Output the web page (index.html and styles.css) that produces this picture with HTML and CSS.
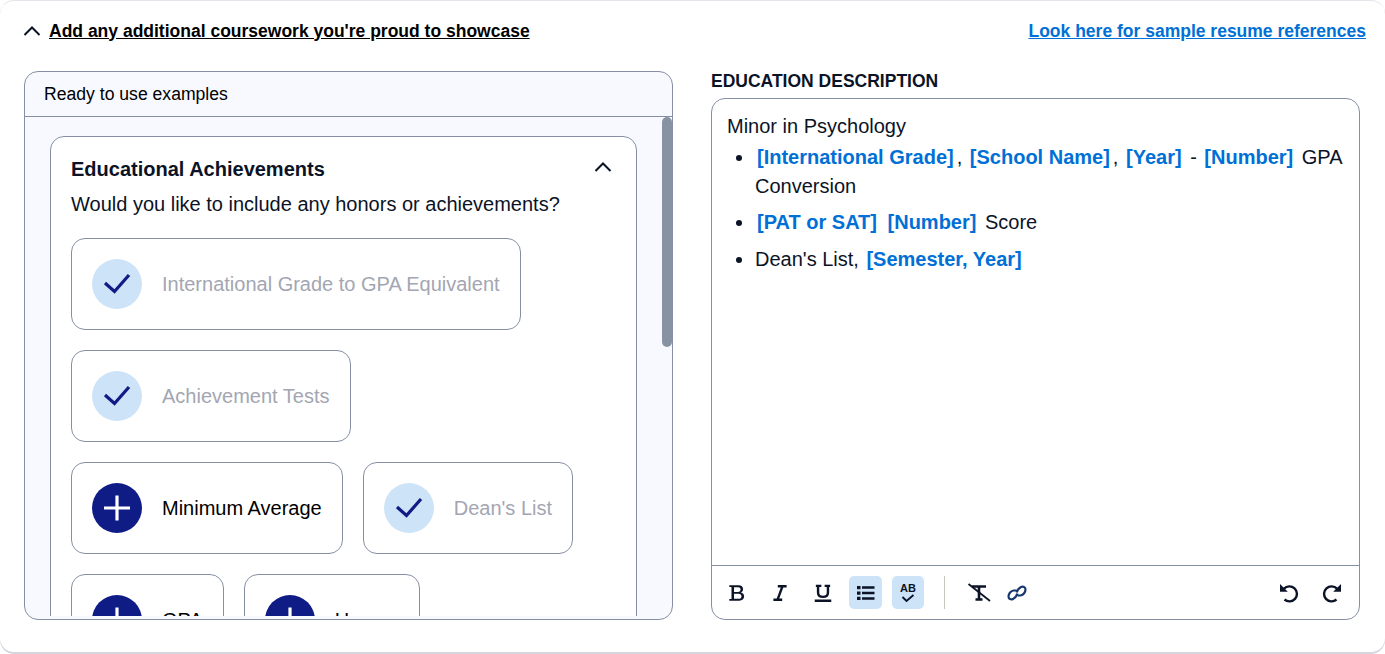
FILE: index.html
```html
<!DOCTYPE html>
<html lang="en">
<head>
    <meta charset="UTF-8">
    <title>Education description</title>
    <link rel="stylesheet" href="styles.css">
</head>
<body>
    <div class="page-card">
        <div class="top-row">
            <a class="toggle-link" href="#">
                <svg class="chevron" width="18" height="18" viewBox="0 0 18 18"><path d="M1.500 13 9 5.500 16.500 13"/></svg>
                <span>Add any additional coursework you're proud to showcase</span>
            </a>
            <a class="sample-link" href="#">Look here for sample resume references</a>
        </div>
        <div class="columns">
            <div class="examples-panel">
                <div class="examples-title">Ready to use examples</div>
                <div class="examples-scroll">
                    <div class="thumb"></div>
                    <div class="group-card">
                        <div class="group-head">
                            <h3>Educational Achievements</h3>
                            <svg class="chevron" width="18" height="18" viewBox="0 0 18 18"><path d="M1.500 13 9 5.500 16.500 13"/></svg>
                        </div>
                        <p class="group-question">Would you like to include any honors or achievements?</p>
                        <div class="chips">
                            <div class="chip-row">
                                <div class="chip used">
                                    <span class="chip-icon"><svg width="30" height="30" viewBox="0 0 30 30"><path d="M3 14 12.500 22.500 27 6"/></svg></span>
                                    International Grade to GPA Equivalent
                                </div>
                            </div>
                            <div class="chip-row">
                                <div class="chip used">
                                    <span class="chip-icon"><svg width="30" height="30" viewBox="0 0 30 30"><path d="M3 14 12.500 22.500 27 6"/></svg></span>
                                    Achievement Tests
                                </div>
                            </div>
                            <div class="chip-row">
                                <div class="chip">
                                    <span class="chip-icon"><svg width="30" height="30" viewBox="0 0 30 30"><path d="M15 2.500V27.500M2 15H28"/></svg></span>
                                    Minimum Average
                                </div>
                                <div class="chip used">
                                    <span class="chip-icon"><svg width="30" height="30" viewBox="0 0 30 30"><path d="M3 14 12.500 22.500 27 6"/></svg></span>
                                    Dean's List
                                </div>
                            </div>
                            <div class="chip-row">
                                <div class="chip">
                                    <span class="chip-icon"><svg width="30" height="30" viewBox="0 0 30 30"><path d="M15 2.500V27.500M2 15H28"/></svg></span>
                                    GPA
                                </div>
                                <div class="chip">
                                    <span class="chip-icon"><svg width="30" height="30" viewBox="0 0 30 30"><path d="M15 2.500V27.500M2 15H28"/></svg></span>
                                    Honors
                                </div>
                            </div>
                        </div>
                    </div>
                </div>
            </div>
            <div class="editor-col">
                <div class="editor-label">EDUCATION DESCRIPTION</div>
                <div class="editor">
                    <div class="editor-body">
                        <div>Minor in Psychology</div>
                        <ul>
                            <li><b class="ph">[International Grade]</b>, <b class="ph">[School Name]</b>, <b class="ph">[Year]</b> - <b class="ph">[Number]</b> GPA Conversion</li>
                            <li><b class="ph">[PAT or SAT]</b> <b class="ph">[Number]</b> Score</li>
                            <li>Dean's List, <b class="ph">[Semester, Year]</b></li>
                        </ul>
                    </div>
                    <div class="toolbar">
                        <span class="tool"><svg width="22" height="22" viewBox="0 0 20 20"><path class="solid" d="M3 3H11.500C14 3 15.500 4.400 15.500 6.500C15.500 8 14.700 9 13.500 9.500C15.200 9.900 16.500 11.100 16.500 13C16.500 15.400 14.800 17 12 17H3V15.500H5V4.500H3ZM7.300 4.700V9H11C12.400 9 13.200 8.100 13.200 6.800C13.200 5.500 12.400 4.700 11 4.700ZM7.300 10.600V15.300H11.500C13.100 15.300 14.100 14.400 14.100 12.900C14.100 11.500 13.100 10.600 11.500 10.600Z"/></svg></span>
                        <span class="tool"><svg width="22" height="22" viewBox="0 0 20 20"><path class="line" d="M8 3.800H16M4 16.200H12M12.300 3.800 7.700 16.200" stroke-width="2.200"/></svg></span>
                        <span class="tool"><svg width="22" height="22" viewBox="0 0 20 20"><path class="line" d="M3.500 3.500H8.500M11.500 3.500H16.500M5.500 3.500V9.500C5.500 12.300 7.300 13.500 10 13.500C12.700 13.500 14.500 12.300 14.500 9.500V3.500M2.500 17H17.500" stroke-width="2.200"/></svg></span>
                        <span class="tool on"><svg width="20" height="20" viewBox="0 0 20 20"><path class="line" d="M6 4.500H18.500M6 10H18.500M6 15.500H18.500" stroke-width="2.400"/><path class="solid" d="M1 3H4.500V6.300H1ZM1 8.400H4.500V11.700H1ZM1 13.800H4.500V17.100H1Z"/></svg></span>
                        <span class="tool on spell"><span class="spell-text">AB</span><svg width="14" height="9" viewBox="0 0 14 9"><path class="line" d="M1.500 3 5.500 7 12.500 1" stroke-width="1.800"/></svg></span>
                        <span class="tool-sep"></span>
                        <span class="tool"><svg width="24" height="20" viewBox="0 0 24 20"><path class="line" d="M5 3.500H19M12 3.500V16.500M8.500 16.500H15.500" stroke-width="2.600"/><path class="line" d="M1.500 1 23 18" stroke-width="1.800"/></svg></span>
                        <span class="tool link-tool"><svg width="20" height="20" viewBox="0 0 20 20"><path class="link" d="M9.300 7.500 6.500 7.500C3.500 8 1.500 11 1.500 13.500C1.500 16 4 17 6 16C8 15 9.800 13 10.300 10.500M10.700 12.500 13.500 12.500C16.500 12 18.500 9 18.500 6.500C18.500 4 16 3 14 4C12 5 10.200 7 9.700 9.500"/></svg></span>
                        <span class="toolbar-gap"></span>
                        <span class="tool"><svg width="22" height="22" viewBox="0 0 22 22"><path class="line" d="M6 6.700A7.500 7.500 0 1 1 6.500 17.500" stroke-width="2.400"/><path class="solid" d="M2 2V9.800H9.800Z"/></svg></span>
                        <span class="tool"><svg width="22" height="22" viewBox="0 0 22 22"><path class="line" d="M16 6.700A7.500 7.500 0 1 0 15.500 17.500" stroke-width="2.400"/><path class="solid" d="M20 2V9.800H12.200Z"/></svg></span>
                    </div>
                </div>
            </div>
        </div>
    </div>
</body>
</html>
```

FILE: styles.css
```css
html, body {
    margin: 0;
    height: 100%;
    overflow: hidden;
}
body {
    background-color: #fff;
    font-family: "Liberation Sans", Arial, sans-serif;
    color: #000;
}
.page-card {
    box-sizing: border-box;
    height: 652px;
    padding: 19px 19px 0 24px;
    background-color: #fff;
    border-top: 1px solid #e4e5ea;
    border-radius: 14px;
    box-shadow: 0 2px 0 #d5d7e0;
}
.top-row {
    display: flex;
    justify-content: space-between;
    align-items: center;
    height: 22px;
    font-size: 17.500px;
    font-weight: bold;
}
.toggle-link {
    display: flex;
    align-items: center;
    gap: 8px;
    color: #000;
    text-decoration: underline;
}
.toggle-link .chevron {
    margin-left: -1px;
}
.sample-link {
    color: #0070d6;
    text-decoration: underline;
}
.chevron path {
    fill: none;
    stroke: #0b1326;
    stroke-width: 2;
}
.columns {
    display: flex;
    gap: 38px;
    margin-top: 29px;
    margin-right: 6px;
}
.examples-panel {
    box-sizing: border-box;
    display: flex;
    flex-direction: column;
    width: 649px;
    height: 549px;
    padding-bottom: 3px;
    background-color: #f8f9ff;
    border: 1px solid #858fa3;
    border-radius: 14px;
    overflow: hidden;
}
.examples-title {
    flex: none;
    box-sizing: border-box;
    height: 45px;
    padding: 12px 19px 0;
    font-size: 17.600px;
    line-height: 20px;
    border-bottom: 1px solid #858fa3;
}
.examples-scroll {
    position: relative;
    flex: 1;
    padding: 19px 35px 0 25px;
    overflow: hidden;
}
.thumb {
    position: absolute;
    top: 0;
    right: 0;
    width: 10px;
    height: 230px;
    background-color: #8792a2;
    border-radius: 5px;
}
.group-card {
    box-sizing: border-box;
    padding: 20px;
    background-color: #fff;
    border: 1px solid #858fa3;
    border-radius: 14px;
}
.group-head {
    display: flex;
    justify-content: space-between;
    align-items: center;
    padding-right: 4px;
}
.group-head h3 {
    margin: 0;
    font-size: 20px;
    line-height: 24px;
    color: #0b1326;
}
.group-head .chevron {
    margin-top: -5px;
}
.group-question {
    margin: 11px 0 0;
    font-size: 20px;
    line-height: 24px;
    color: #0b1326;
}
.chips {
    display: flex;
    flex-direction: column;
    gap: 20px;
    margin-top: 22px;
}
.chip-row {
    display: flex;
    gap: 20px;
}
.chip {
    box-sizing: border-box;
    display: flex;
    align-items: center;
    gap: 20px;
    height: 92px;
    padding: 0 20px;
    font-size: 20px;
    color: #000;
    background-color: #fff;
    border: 1px solid #858fa3;
    border-radius: 14px;
}
.chip.used {
    color: #a3a6b2;
}
.chip-icon {
    flex: none;
    display: flex;
    align-items: center;
    justify-content: center;
    width: 50px;
    height: 50px;
    background-color: #0f1c85;
    border-radius: 50%;
}
.chip-icon path {
    fill: none;
    stroke: #fff;
    stroke-width: 3.200;
}
.chip.used .chip-icon {
    background-color: #cde3f8;
}
.chip.used .chip-icon path {
    stroke: #0f1c85;
}
.editor-col {
    width: 649px;
}
.editor-label {
    height: 27px;
    padding-top: 1px;
    box-sizing: border-box;
    font-size: 17.500px;
    line-height: 18px;
    font-weight: bold;
    color: #0b1326;
}
.editor {
    box-sizing: border-box;
    display: flex;
    flex-direction: column;
    height: 522px;
    border: 1px solid #858fa3;
    border-radius: 14px;
}
.editor-body {
    flex: 1;
    padding: 13px 16px 0 15px;
    font-size: 20px;
    line-height: 28px;
    color: #0b1326;
}
.editor-body ul {
    margin: 3px 0 0;
    padding-left: 28px;
}
.editor-body li {
    margin-bottom: 7.400px;
    line-height: 29px;
}
.ph {
    margin: 0 3px 0 2px;
    color: #0070d6;
}
.toolbar {
    flex: none;
    box-sizing: border-box;
    display: flex;
    align-items: center;
    height: 54px;
    padding: 0 11px 0 8px;
    border-top: 1px solid #858fa3;
}
.tool {
    display: flex;
    align-items: center;
    justify-content: center;
    width: 33px;
    height: 33px;
    margin-right: 10px;
    border-radius: 5px;
}
.tool.on {
    background-color: #cde3f8;
}
.tool svg {
    display: block;
}
.solid {
    fill: #0b1326;
}
.line {
    fill: none;
    stroke: #0b1326;
}
.link {
    fill: none;
    stroke: #17386e;
    stroke-width: 2.200;
}
.spell {
    flex-direction: column;
    width: 32px;
}
.spell-text {
    font-size: 11px;
    line-height: 11px;
    font-weight: bold;
    color: #0b1326;
}
.tool-sep {
    width: 1px;
    height: 33px;
    margin: 0 17px 0 10px;
    background-color: #c9c6c0;
}
.link-tool {
    margin-right: 0;
    margin-left: -5px;
}
.toolbar-gap {
    flex: 1;
}
.toolbar .tool:last-child {
    margin-right: 0;
}
```
